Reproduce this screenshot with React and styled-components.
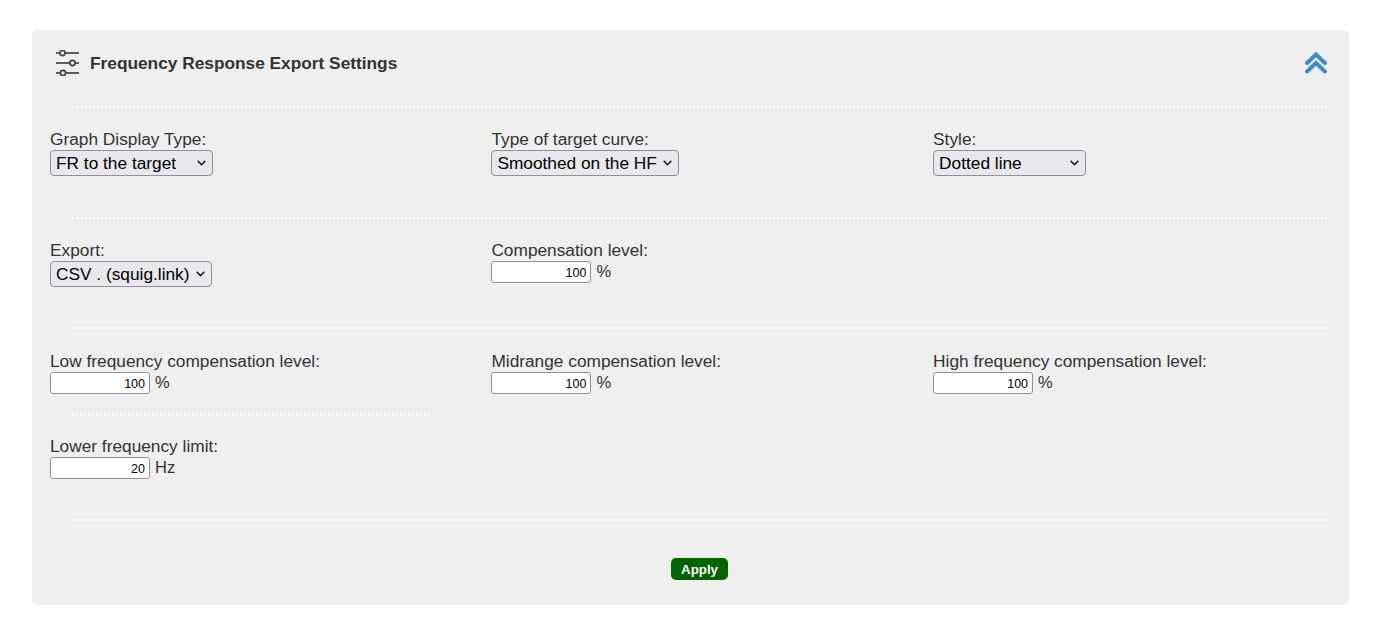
import styled, { createGlobalStyle } from 'styled-components'

const GlobalStyle = createGlobalStyle`
  html, body {
    margin: 0;
    background: #fff;
  }
  body {
    font-family: "Liberation Sans", Arial, sans-serif;
    color: #333;
  }
`

const arrow = encodeURIComponent(
  '<svg xmlns="http://www.w3.org/2000/svg" width="9" height="6" viewBox="0 0 9 6" fill="none" stroke="#222" stroke-width="1.5"><polyline points="0.7,0.9 4.5,4.6 8.3,0.9"/></svg>'
)

const SettingsIcon = () => (
  <svg width="24" height="26" viewBox="0 0 24 26" fill="none" stroke="#444" strokeWidth="1.7">
    <line x1="0" y1="3" x2="4" y2="3" />
    <circle cx="6.5" cy="3" r="2.6" />
    <line x1="9" y1="3" x2="23" y2="3" />
    <line x1="0" y1="13" x2="14" y2="13" />
    <circle cx="16.5" cy="13" r="2.6" />
    <line x1="19" y1="13" x2="23" y2="13" />
    <line x1="0" y1="23" x2="4.5" y2="23" />
    <circle cx="7" cy="23" r="2.6" />
    <line x1="9.5" y1="23" x2="23" y2="23" />
  </svg>
)

const CollapseIcon = () => (
  <svg width="22" height="22" viewBox="0 0 22 22" fill="none" stroke="#3d8cc6" strokeWidth="4" strokeLinecap="round">
    <polyline points="2,11 11,2.5 20,11" />
    <polyline points="2,19.5 11,11 20,19.5" />
  </svg>
)

const Field = ({ label, children }) => (
  <FieldBox>
    <Label>{label}</Label>
    <Control>{children}</Control>
  </FieldBox>
)

const NumberField = ({ label, value, unit }) => (
  <Field label={label}>
    <NumberInput type="text" defaultValue={value} />
    <Unit>{unit}</Unit>
  </Field>
)

const ExportSettings = () => {
  return (
    <Panel>
      <Header>
        <Title>
          <SettingsIcon />
          <h2>Frequency Response Export Settings</h2>
        </Title>
        <CollapseIcon />
      </Header>
      <Divider />
      <Row $height={109} $top={22}>
        <Field label="Graph Display Type:">
          <Select $width={163} defaultValue="fr">
            <option value="fr">FR to the target</option>
          </Select>
        </Field>
        <Field label="Type of target curve:">
          <Select $width={188} defaultValue="hf">
            <option value="hf">Smoothed on the HF</option>
          </Select>
        </Field>
        <Field label="Style:">
          <Select $width={153} defaultValue="dot">
            <option value="dot">Dotted line</option>
          </Select>
        </Field>
      </Row>
      <Divider />
      <Row $height={108} $top={22}>
        <Field label="Export:">
          <Select $width={162} defaultValue="csv">
            <option value="csv">CSV . (squig.link)</option>
          </Select>
        </Field>
        <NumberField label="Compensation level:" value="100" unit="%" />
      </Row>
      <Divider />
      <Row $height={85} $top={23}>
        <NumberField label="Low frequency compensation level:" value="100" unit="%" />
        <NumberField label="Midrange compensation level:" value="100" unit="%" />
        <NumberField label="High frequency compensation level:" value="100" unit="%" />
      </Row>
      <Divider $short />
      <Row $height={103} $top={21}>
        <NumberField label="Lower frequency limit:" value="20" unit="Hz" />
      </Row>
      <Divider />
      <Footer>
        <ApplyButton type="button">Apply</ApplyButton>
      </Footer>
    </Panel>
  )
}

const App = () => (
  <>
    <GlobalStyle />
    <Page>
      <ExportSettings />
    </Page>
  </>
)

const Page = styled.main`
  padding: 30px 31px 32px 32px;
`

const Panel = styled.section`
  box-sizing: border-box;
  height: 575px;
  padding: 0 22px 0 18px;
  background: #efefef;
  border-radius: 5px;
`

const Header = styled.header`
  box-sizing: border-box;
  display: flex;
  align-items: center;
  justify-content: space-between;
  height: 76px;
  padding: 0 0 10px 6px;
`

const Title = styled.div`
  display: flex;
  align-items: center;
  gap: 10px;
  h2 {
    margin: 0;
    font-size: 17.3px;
    font-weight: 700;
    color: #333;
  }
`

const Divider = styled.hr`
  box-sizing: border-box;
  width: ${(p) => (p.$short ? '358px' : 'auto')};
  height: 2px;
  margin: 0 0 0 22px;
  border: 0;
  border-top: 2px dotted #fff;
`

const Row = styled.div`
  box-sizing: border-box;
  display: grid;
  grid-template-columns: 441.4px 441.7px 1fr;
  align-content: start;
  height: ${(p) => p.$height}px;
  padding-top: ${(p) => p.$top}px;
`

const FieldBox = styled.div`
  display: flex;
  flex-direction: column;
  align-items: flex-start;
`

const Label = styled.label`
  margin-bottom: 2px;
  font-size: 17.3px;
  line-height: 18px;
  color: #333;
`

const Control = styled.div`
  display: flex;
  align-items: center;
  gap: 5px;
`

const Select = styled.select`
  box-sizing: border-box;
  width: ${(p) => p.$width}px;
  height: 26px;
  padding: 0 0 0 5px;
  font-family: "Liberation Sans", Arial, sans-serif;
  font-size: 17.3px;
  color: #000;
  appearance: none;
  background: #e9e9ed url("data:image/svg+xml,${arrow}") no-repeat right 6px center;
  border: 1px solid #8f8f9d;
  border-radius: 4px;
`

const NumberInput = styled.input`
  box-sizing: border-box;
  width: 100px;
  height: 22px;
  padding: 1px 4px 0 3px;
  font-family: "Liberation Sans", Arial, sans-serif;
  font-size: 12.5px;
  text-align: right;
  color: #000;
  background: #fff;
  border: 1px solid #8f8f9d;
  border-radius: 3px;
`

const Unit = styled.span`
  padding-bottom: 2px;
  font-size: 16.5px;
  color: #333;
`

const Footer = styled.footer`
  display: flex;
  justify-content: center;
  margin-left: 22px;
  padding-top: 37px;
`

const ApplyButton = styled.button`
  box-sizing: border-box;
  width: 57px;
  height: 22px;
  padding: 0;
  font-family: "Liberation Sans", Arial, sans-serif;
  font-size: 13.3px;
  font-weight: 700;
  color: #fff;
  background: #006400;
  border: 0;
  border-radius: 5px;
`

export default App
